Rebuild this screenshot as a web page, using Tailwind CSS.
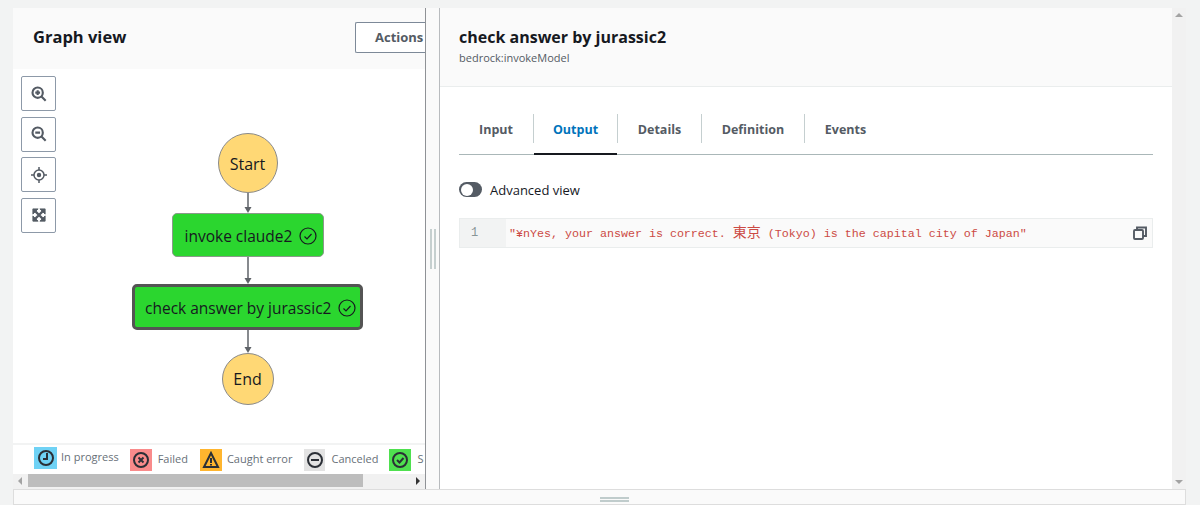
<!DOCTYPE html>
<html lang="en">
<head>
  <meta charset="UTF-8" />
  <title>Graph view</title>
  <script src="https://cdn.jsdelivr.net/npm/@tailwindcss/browser@4"></script>
</head>
<body class="h-[505px] w-[1200px] overflow-hidden bg-[#f2f3f3] font-['Open_Sans','Noto_Sans',sans-serif] text-[#16191f]">
  <div class="pl-[13px] pr-[14px] pt-[8px]">
    <div class="flex h-[481px] bg-white">

      <!-- graph panel -->
      <div class="flex w-[412px] shrink-0 flex-col overflow-hidden">
        <div class="flex h-[61px] shrink-0 items-center justify-between bg-[#fafafa] pl-[20px]">
          <h2 class="-translate-y-[1px] text-[16.5px] font-bold">Graph view</h2>
          <div class="flex h-[31px] w-[70px] -translate-y-[1px] items-center rounded-l-[2px] border border-r-0 border-[#7d8998] bg-white pl-[19px] text-[13px] font-bold text-[#545b64]">Actions</div>
        </div>
        <div class="relative min-h-0 flex-1">
          <div class="absolute left-[8px] top-[7px] flex flex-col gap-[5.5px]">
            <button class="flex h-[35px] w-[35px] items-center justify-center rounded-[2px] border border-[#8d99a8] bg-white">
              <svg class="h-[16px] w-[16px]" viewBox="0 0 18 18" fill="none" stroke="#545b64" stroke-width="2.4"><circle cx="7.5" cy="7.5" r="5.8"/><path d="M11.5 11.5 16.5 16.5M4.8 7.5h5.4M7.5 4.8v5.4" /></svg>
            </button>
            <button class="flex h-[35px] w-[35px] items-center justify-center rounded-[2px] border border-[#8d99a8] bg-white">
              <svg class="h-[16px] w-[16px]" viewBox="0 0 18 18" fill="none" stroke="#545b64" stroke-width="2.4"><circle cx="7.5" cy="7.5" r="5.8"/><path d="M11.5 11.5 16.5 16.5M4.8 7.5h5.4" /></svg>
            </button>
            <button class="flex h-[35px] w-[35px] items-center justify-center rounded-[2px] border border-[#8d99a8] bg-white">
              <svg class="h-[16px] w-[16px]" viewBox="0 0 16 16" fill="none" stroke="#545b64" stroke-width="1.5"><circle cx="8" cy="8" r="5"/><circle cx="8" cy="8" r="2.2" fill="#545b64" stroke="none"/><path d="M8 0v3M8 13v3M0 8h3M13 8h3"/></svg>
            </button>
            <button class="flex h-[35px] w-[35px] items-center justify-center rounded-[2px] border border-[#8d99a8] bg-white">
              <svg class="h-[14px] w-[14px]" viewBox="0 0 16 16" fill="#545b64" stroke="#545b64"><path d="M1 1h6L1 7zM15 1v6L9 1zM1 15V9l6 6zM15 15H9l6-6z"/><path d="M3 3l10 10M13 3 3 13" stroke-width="2.5"/></svg>
            </button>
          </div>

          <!-- state machine -->
          <div class="flex flex-col items-center pl-[57px] pt-[64px] text-[15.5px]">
            <div class="flex h-[60px] w-[60px] items-center justify-center rounded-full border border-[#8a8a8a] bg-[#ffd875] pt-[2px] text-[16px]">Start</div>
            <svg class="h-[20px] w-[10px]" viewBox="0 0 10 20"><path d="M5 0v14" stroke="#5f6368" stroke-width="1.5"/><path d="M1.5 14h7L5 20z" fill="#5f6368"/></svg>
            <div class="flex h-[44px] w-[152px] items-center gap-[7px] whitespace-nowrap rounded-[5px] border border-[#8a9a8a] bg-[#2bd62f] pl-[12px] pt-[2px]">
              <span class="translate-y-[1px]">invoke claude2</span>
              <svg class="h-[18px] w-[18px] shrink-0" viewBox="0 0 18 18" fill="none" stroke="#16191f" stroke-width="1.2"><circle cx="9" cy="9" r="8"/><path d="M5.5 9.5 8 12l4.5-5"/></svg>
            </div>
            <svg class="h-[27px] w-[10px]" viewBox="0 0 10 27"><path d="M5 0v21" stroke="#5f6368" stroke-width="1.5"/><path d="M1.5 21h7L5 27z" fill="#5f6368"/></svg>
            <div class="flex h-[46px] w-[231px] items-center gap-[7px] whitespace-nowrap rounded-[5px] border-[3px] border-[#545454] bg-[#2bd62f] pl-[10px] pt-[2px]">
              <span class="translate-y-[1px]">check answer by jurassic2</span>
              <svg class="h-[18px] w-[18px] shrink-0" viewBox="0 0 18 18" fill="none" stroke="#16191f" stroke-width="1.2"><circle cx="9" cy="9" r="8"/><path d="M5.5 9.5 8 12l4.5-5"/></svg>
            </div>
            <svg class="h-[23px] w-[10px]" viewBox="0 0 10 23"><path d="M5 0v17" stroke="#5f6368" stroke-width="1.5"/><path d="M1.5 17h7L5 23z" fill="#5f6368"/></svg>
            <div class="flex h-[52px] w-[52px] items-center justify-center rounded-full border border-[#8a8a8a] bg-[#ffd875] text-[16px]">End</div>
          </div>
        </div>

        <!-- legend -->
        <div class="flex h-[31px] shrink-0 items-center whitespace-nowrap border-t-2 border-[#f2f3f3] pl-[21px] text-[11px] text-[#687078]">
          <span class="flex h-[22px] w-[23px] -translate-y-[2px] items-center justify-center bg-[#6fd2f5]">
            <svg class="h-[18px] w-[18px]" viewBox="0 0 18 18" fill="none" stroke="#2b2f36" stroke-width="2"><circle cx="9" cy="9" r="7"/><path d="M10 4v6H6"/></svg>
          </span>
          <span class="ml-[4px] -translate-y-[2px]">In progress</span>
          <span class="ml-[11px] flex h-[22px] w-[22px] items-center justify-center bg-[#f98b8b]">
            <svg class="h-[18px] w-[18px]" viewBox="0 0 18 18" fill="none" stroke="#2b2f36" stroke-width="2"><circle cx="9" cy="9" r="7"/><path d="m6.5 6.5 5 5M11.5 6.5l-5 5"/></svg>
          </span>
          <span class="ml-[6px]">Failed</span>
          <span class="ml-[12px] flex h-[22px] w-[22px] items-center justify-center bg-[#ffb52e]">
            <svg class="h-[18px] w-[18px]" viewBox="0 0 18 18" fill="none" stroke="#2b2f36" stroke-width="2"><path d="M9 2 2 16h14zM9 7v5M9 13v1.5"/></svg>
          </span>
          <span class="ml-[5px]">Caught error</span>
          <span class="ml-[12px] flex h-[22px] w-[21px] items-center justify-center bg-[#e3e3e3]">
            <svg class="h-[18px] w-[18px]" viewBox="0 0 18 18" fill="none" stroke="#2b2f36" stroke-width="2"><circle cx="9" cy="9" r="7"/><path d="M5 9h8"/></svg>
          </span>
          <span class="ml-[6px]">Canceled</span>
          <span class="ml-[11px] flex h-[22px] w-[22px] shrink-0 items-center justify-center bg-[#4fe04f]">
            <svg class="h-[18px] w-[18px]" viewBox="0 0 18 18" fill="none" stroke="#2b2f36" stroke-width="2"><circle cx="9" cy="9" r="7"/><path d="m6 9 2.5 2.5L12.5 7"/></svg>
          </span>
          <span class="ml-[6px] w-[7px] overflow-hidden">Succeeded</span>
        </div>

        <!-- horizontal scrollbar -->
        <div class="flex h-[15px] shrink-0 items-start bg-[#f1f1f1]">
          <span class="ml-[5px] mt-[3px] h-0 w-0 border-y-[4px] border-r-[4px] border-y-transparent border-r-[#a3a3a3]"></span>
          <span class="ml-[6px] h-[13px] w-[335px] bg-[#bdbdbd]"></span>
          <span class="ml-auto mr-[5px] mt-[3px] h-0 w-0 border-y-[4px] border-l-[4px] border-y-transparent border-l-[#333]"></span>
        </div>
      </div>

      <!-- split handle -->
      <div class="flex w-[15px] shrink-0 items-center justify-center gap-[2px] border-x border-l-[#8f9296] border-r-[#b8bbbe] bg-[#fafafa]">
        <span class="h-[40px] w-[2px] bg-[#c5cfcf]"></span>
        <span class="h-[40px] w-[2px] bg-[#c5cfcf]"></span>
      </div>

      <!-- details panel -->
      <div class="flex min-w-0 flex-1 flex-col">
        <div class="h-[79px] shrink-0 border-b border-[#eaeded] bg-[#fafafa] pl-[19px] pt-[17px]">
          <h2 class="text-[16px] font-bold leading-[24px]">check answer by jurassic2</h2>
          <p class="text-[11px] leading-[18px] text-[#545b64]">bedrock:invokeModel</p>
        </div>
        <div class="pl-[19px] pr-[19px] pt-[27px]">
          <div class="flex h-[41px] border-b border-[#aab7b8] text-[12.5px] font-bold text-[#545b64]">
            <div class="flex h-[29px] w-[74px] items-center justify-center pt-[4px]">Input</div>
            <div class="relative flex h-[29px] w-[85px] items-center justify-center border-x border-[#c5cfd0] pt-[4px] text-[#0073bb]">Output
              <span class="absolute -bottom-[12px] left-0 right-0 h-[2px] bg-[#16191f]"></span>
            </div>
            <div class="flex h-[29px] w-[84px] items-center justify-center border-r border-[#c5cfd0] pt-[4px]">Details</div>
            <div class="flex h-[29px] w-[103px] items-center justify-center border-r border-[#c5cfd0] pt-[4px]">Definition</div>
            <div class="flex h-[29px] w-[81px] items-center justify-center pt-[4px]">Events</div>
          </div>
          <div class="mt-[26px] flex items-center gap-[8px] text-[13px] text-[#16191f]">
            <span class="flex h-[15px] w-[23px] -translate-y-[1px] items-center rounded-full bg-[#545b64] pl-[2px]"><span class="h-[12px] w-[12px] rounded-full bg-white"></span></span>
            Advanced view
          </div>
          <div class="mt-[17px] flex h-[30px] items-center border border-[#eaeded] bg-[#fafafa]">
            <div class="flex h-full w-[46px] items-center bg-[#f2f3f3] pl-[11px] font-['Liberation_Mono',monospace] text-[12px] text-[#879596]">1</div>
            <div class="flex-1 whitespace-pre pl-[3px] pt-[5px] font-['Liberation_Mono','Noto_Sans_CJK_JP',monospace] text-[11.67px] text-[#cc4a44]">"¥nYes, your answer is correct. <span class="text-[14px] leading-none">東京</span> (Tokyo) is the capital city of Japan"</div>
            <svg class="mr-[5px] h-[14px] w-[14px]" viewBox="0 0 14 14" fill="none" stroke="#545b64" stroke-width="1.9"><rect x="1" y="4" width="9" height="9" rx="1"/><path d="M4 4V1.5h9V10h-3"/></svg>
          </div>
        </div>
      </div>

      <!-- page scrollbar -->
      <div class="flex w-[14px] shrink-0 flex-col items-center justify-between bg-[#f1f1f1] pb-[5px] pt-[5px]">
        <span class="h-0 w-0 border-x-[4px] border-b-[4px] border-x-transparent border-b-[#a3a3a3]"></span>
        <span class="h-0 w-0 border-x-[4px] border-t-[4px] border-x-transparent border-t-[#a3a3a3]"></span>
      </div>
    </div>
    <div class="flex h-[16px] justify-center border border-[#dddddd] bg-[#fafafa] pl-[29px] pt-[7px]">
      <div class="h-[5px] w-[29px] border-y-2 border-[#c0cccc]"></div>
    </div>
  </div>
</body>
</html>
